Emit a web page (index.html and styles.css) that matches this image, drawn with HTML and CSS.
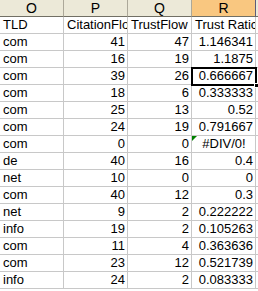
FILE: index.html
```html
<!DOCTYPE html>
<html lang="en">
<head>
    <meta charset="UTF-8">
    <title>Sheet1</title>
    <link rel="stylesheet" href="styles.css">
</head>
<body>

<div class="sheet">
    <!-- column headers -->
    <div class="hd">O</div>
    <div class="hd">P</div>
    <div class="hd">Q</div>
    <div class="hd sel">R</div>
    <div class="hd edge"></div>

    <div class="c">TLD</div>
    <div class="c">CitationFlo</div>
    <div class="c">TrustFlow</div>
    <div class="c">Trust Ratic</div>
    <div class="c edge"></div>

    <div class="c">com</div><div class="c n">41</div><div class="c n">47</div><div class="c n">1.146341</div><div class="c edge"></div>
    <div class="c">com</div><div class="c n">16</div><div class="c n">19</div><div class="c n">1.1875</div><div class="c edge"></div>
    <div class="c">com</div><div class="c n">39</div><div class="c n">26</div><div class="c n active">0.666667</div><div class="c edge"></div>
    <div class="c">com</div><div class="c n">18</div><div class="c n">6</div><div class="c n">0.333333</div><div class="c edge"></div>
    <div class="c">com</div><div class="c n">25</div><div class="c n">13</div><div class="c n">0.52</div><div class="c edge"></div>
    <div class="c">com</div><div class="c n">24</div><div class="c n">19</div><div class="c n">0.791667</div><div class="c edge"></div>
    <div class="c">com</div><div class="c n">0</div><div class="c n">0</div><div class="c err">#DIV/0!</div><div class="c edge"></div>
    <div class="c">de</div><div class="c n">40</div><div class="c n">16</div><div class="c n">0.4</div><div class="c edge"></div>
    <div class="c">net</div><div class="c n">10</div><div class="c n">0</div><div class="c n">0</div><div class="c edge"></div>
    <div class="c">com</div><div class="c n">40</div><div class="c n">12</div><div class="c n">0.3</div><div class="c edge"></div>
    <div class="c">net</div><div class="c n">9</div><div class="c n">2</div><div class="c n">0.222222</div><div class="c edge"></div>
    <div class="c">info</div><div class="c n">19</div><div class="c n">2</div><div class="c n">0.105263</div><div class="c edge"></div>
    <div class="c">com</div><div class="c n">11</div><div class="c n">4</div><div class="c n">0.363636</div><div class="c edge"></div>
    <div class="c">com</div><div class="c n">23</div><div class="c n">12</div><div class="c n">0.521739</div><div class="c edge"></div>
    <div class="c">info</div><div class="c n">24</div><div class="c n">2</div><div class="c n">0.083333</div><div class="c edge"></div>
</div>

</body>
</html>
```
FILE: styles.css
```css
body {
    margin: 0;
    background: #fff;
    overflow: hidden;
}
.sheet {
    display: grid;
    grid-template-columns: 64px 64px 64px 64px 10px;
    grid-auto-rows: 17px;
    font-family: "Liberation Sans", Arial, sans-serif;
    font-size: 13px;
    color: #000;
}
.hd {
    box-sizing: border-box;
    background: #ece9d8;
    border-right: 1px solid #aca899;
    border-bottom: 1px solid #716f64;
    text-align: center;
    line-height: 16px;
    font-size: 14px;
}
.hd.sel {
    background: #f9c780;
    border-right-color: #5c5c7a;
}
.c {
    box-sizing: border-box;
    border-right: 1px solid #c8c8c8;
    border-bottom: 1px solid #c8c8c8;
    padding: 0 2px 0 3px;
    line-height: 16px;
    white-space: nowrap;
    overflow: hidden;
    position: relative;
}
.n {
    text-align: right;
}
.err {
    text-align: center;
}
/* little green error marker */
.err::before {
    content: "";
    position: absolute;
    left: 0;
    top: 0;
    border-top: 5px solid #008000;
    border-right: 5px solid transparent;
}
/* current cell */
.active {
    overflow: visible;
    outline: 2px solid #000;
    outline-offset: -1px;
    z-index: 1;
}
.active::after {
    content: "";
    position: absolute;
    right: -4px;
    bottom: -4px;
    width: 5px;
    height: 5px;
    background: #000;
    border: 1px solid #fff;
    box-sizing: border-box;
}
```
